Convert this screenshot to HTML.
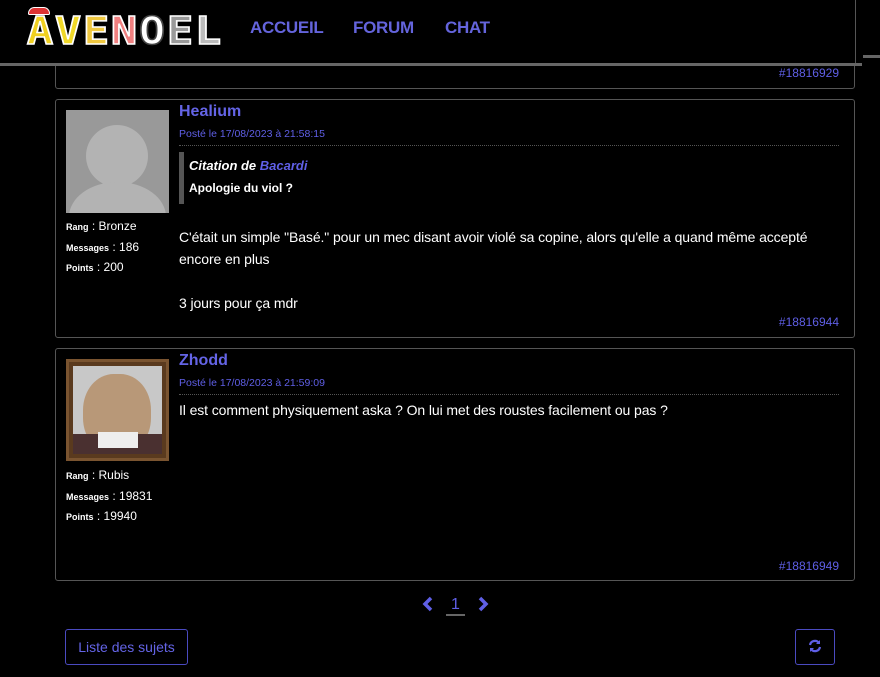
<!DOCTYPE html>
<html><head><meta charset="utf-8"><style>
*{margin:0;padding:0;box-sizing:border-box}
body{width:880px;height:677px;background:#000;overflow:hidden;position:relative;font-family:"Liberation Sans",sans-serif;color:#fff}
.a{position:absolute}
.box{position:absolute;left:55px;width:800px;border:1px solid #555;border-radius:3px}
.blue{color:#5f5fe6}
.nav{font-size:17px;font-weight:bold;color:#6464dc;top:18px;letter-spacing:-0.3px}
.name{font-size:16px;font-weight:bold;color:#6464e6}
.date{font-size:10.5px;color:#5f5fe6}
.sep{border-top:1px dotted #555;width:660px}
.stat{font-size:12px;line-height:19.5px;color:#fff}
.stat small{font-size:9px;font-weight:bold}
.txt{font-size:14px;line-height:22px;letter-spacing:-0.1px}
.id{font-size:12px;color:#5f5fe6;right:14px}
.logo span{display:inline-block;width:28px;text-align:center;font-family:"DejaVu Sans Mono",monospace;font-weight:bold;font-size:38px;line-height:36px;-webkit-text-stroke:1.5px #fff;transform:scaleX(1.15)}
</style></head><body>
<div class="box" style="top:-10px;height:99px"></div>
<div class="a id" style="top:66px;right:41px">#18816929</div>
<div class="a" style="left:0;top:63px;width:862px;height:3px;background:#666"></div>
<div class="a" style="left:863px;top:55px;width:17px;height:3px;background:#666"></div>
<div class="a" style="left:0;top:0;width:860px;height:63px;background:#000"></div>
<div class="a" style="left:855px;top:0;width:1px;height:63px;background:#555"></div>
<div class="a logo" style="left:26px;top:13px;height:36px;white-space:nowrap">
<span style="color:#f0d020">A</span><span style="color:#f0d828">V</span><span style="color:#f0c840">E</span><span style="color:#f08080">N</span><span style="color:#fff;-webkit-text-stroke:1.5px #444">O</span><span style="color:#999">E</span><span style="color:#bbb">L</span>
</div>
<div class="a" style="left:28px;top:7px;width:22px;height:8px;background:#d33;border-radius:8px 8px 2px 2px;border:1px solid #fff"></div>
<div class="a nav" style="left:250px">ACCUEIL</div>
<div class="a nav" style="left:353px">FORUM</div>
<div class="a nav" style="left:445px">CHAT</div>

<div class="box" style="top:99px;height:239px"></div>
<div class="a" style="left:66px;top:110px;width:103px;height:103px;background:#999;overflow:hidden">
<div class="a" style="left:20px;top:15px;width:62px;height:62px;border-radius:50%;background:#b3b3b3"></div>
<div class="a" style="left:3px;top:72px;width:97px;height:70px;border-radius:50%;background:#b3b3b3"></div>
</div>
<div class="a stat" style="left:66px;top:217px"><small>Rang</small> : Bronze<br><small>Messages</small> : 186<br><small>Points</small> : 200</div>
<div class="a name" style="left:179px;top:103px">Healium</div>
<div class="a date" style="left:179px;top:128px">Posté le 17/08/2023 à 21:58:15</div>
<div class="a sep" style="left:179px;top:145px"></div>
<div class="a" style="left:179px;top:152px;width:5px;height:52px;background:#555"></div>
<div class="a" style="left:189px;top:158px;font-size:13px;font-weight:bold;font-style:italic">Citation de <span class="blue">Bacardi</span></div>
<div class="a" style="left:189px;top:181px;font-size:12px;font-weight:bold">Apologie du viol ?</div>
<div class="a txt" style="left:179px;top:226px;width:660px">C'était un simple "Basé." pour un mec disant avoir violé sa copine, alors qu'elle a quand même accepté encore en plus<br><br>3 jours pour ça mdr</div>
<div class="a id" style="top:315px;right:41px">#18816944</div>

<div class="box" style="top:348px;height:233px"></div>
<div class="a" style="left:66px;top:359px;width:103px;height:102px;background:#5a3a1e;border:3px solid #7a5430">
<div class="a" style="left:4px;top:4px;width:89px;height:88px;background:#c8c8c8;overflow:hidden">
<div class="a" style="left:10px;top:8px;width:68px;height:80px;border-radius:45%;background:#b89878"></div>
<div class="a" style="left:0;top:68px;width:89px;height:22px;background:#4a3030"></div>
<div class="a" style="left:25px;top:66px;width:40px;height:16px;background:#eee"></div>
</div></div>
<div class="a stat" style="left:66px;top:466px"><small>Rang</small> : Rubis<br><small>Messages</small> : 19831<br><small>Points</small> : 19940</div>
<div class="a name" style="left:179px;top:352px">Zhodd</div>
<div class="a date" style="left:179px;top:377px">Posté le 17/08/2023 à 21:59:09</div>
<div class="a sep" style="left:179px;top:394px"></div>
<div class="a txt" style="left:179px;top:399px">Il est comment physiquement aska ? On lui met des roustes facilement ou pas ?</div>
<div class="a id" style="top:559px;right:41px">#18816949</div>

<svg class="a" style="left:421px;top:596px" width="14" height="16" viewBox="0 0 14 16"><path d="M10 2 L4 8 L10 14" stroke="#5f5fe6" stroke-width="3.5" fill="none"/></svg>
<div class="a blue" style="left:451px;top:596px;font-size:16px">1</div>
<div class="a" style="left:446px;top:614px;width:19px;height:2px;background:#666"></div>
<svg class="a" style="left:476px;top:596px" width="14" height="16" viewBox="0 0 14 16"><path d="M4 2 L10 8 L4 14" stroke="#5f5fe6" stroke-width="3.5" fill="none"/></svg>

<div class="a" style="left:65px;top:629px;width:123px;height:36px;border:1px solid #4a4ac0;border-radius:3px;color:#6464e6;font-size:14px;line-height:34px;text-align:center">Liste des sujets</div>
<div class="a" style="left:795px;top:629px;width:40px;height:36px;border:1px solid #4a4ac0;border-radius:3px"></div>
<svg class="a" style="left:807px;top:638px" width="16" height="16" viewBox="0 0 16 16"><path d="M3 7 A5 5 0 0 1 12 5 M13 9 A5 5 0 0 1 4 11" stroke="#5f5fe6" stroke-width="2.2" fill="none"/><path d="M13 2 V6 H9 Z M3 14 V10 H7 Z" fill="#5f5fe6"/></svg>
</body></html>
